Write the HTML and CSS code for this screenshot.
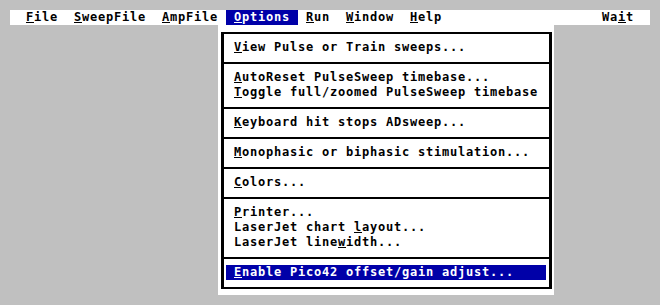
FILE: index.html
```html
<!DOCTYPE html>
<html lang="en">
<head>
    <meta charset="UTF-8">
    <meta name="viewport" content="width=device-width, initial-scale=1.0">
    <title>Options</title>
    <link rel="stylesheet" href="styles.css">
</head>
<body>
    <div class="menubar">
        <span class="menu"><u>F</u>ile</span>
        <span class="menu"><u>S</u>weepFile</span>
        <span class="menu"><u>A</u>mpFile</span>
        <span class="menu open"><u>O</u>ptions</span>
        <span class="menu"><u>R</u>un</span>
        <span class="menu"><u>W</u>indow</span>
        <span class="menu"><u>H</u>elp</span>
        <span class="menu status">Wa<u>i</u>t</span>
    </div>

    <div class="dropdown">
        <div class="frame">
            <div class="section">
                <div class="item"><u>V</u>iew Pulse or Train sweeps...</div>
            </div>
            <div class="section">
                <div class="item"><u>A</u>utoReset PulseSweep timebase...</div>
                <div class="item"><u>T</u>oggle full/zoomed PulseSweep timebase</div>
            </div>
            <div class="section">
                <div class="item"><u>K</u>eyboard hit stops ADsweep...</div>
            </div>
            <div class="section">
                <div class="item"><u>M</u>onophasic or biphasic stimulation...</div>
            </div>
            <div class="section">
                <div class="item"><u>C</u>olors...</div>
            </div>
            <div class="section">
                <div class="item"><u>P</u>rinter...</div>
                <div class="item">LaserJet chart <u>l</u>ayout...</div>
                <div class="item">LaserJet line<u>w</u>idth...</div>
            </div>
            <div class="section">
                <div class="item active"><u>E</u>nable Pico42 offset/gain adjust...</div>
            </div>
        </div>
    </div>
</body>
</html>
```

FILE: styles.css
```css
body {
    margin: 0;
    padding: 10px;
    background-color: #c0c0c0;
    font-family: "DejaVu Sans Mono", monospace;
    font-weight: bold;
    font-size: 12px;
    letter-spacing: 0.775px;
    line-height: 15px;
    color: #000;
}
u {
    text-decoration: underline;
    text-decoration-thickness: 1px;
    text-underline-offset: 1px;
}
.menubar {
    display: flex;
    width: 640px;
    height: 15px;
    padding: 0 8px;
    box-sizing: border-box;
    background-color: #fff;
}
.menu {
    padding: 0 8px;
    white-space: pre;
}
.menu.open {
    background-color: #0000a8;
    color: #fff;
}
.menu.status {
    margin-left: auto;
}
.dropdown {
    margin-left: 208px;
    width: 336px;
    height: 270px;
    padding: 7px 2px 6px 3px;
    box-sizing: border-box;
    background-color: #fff;
}
.frame {
    border-style: solid;
    border-color: #000;
    border-width: 2px 3px;
}
.section {
    padding: 6px 0 7px;
}
.section + .section {
    border-top: 2px solid #000;
}
.item {
    padding-left: 10px;
    white-space: pre;
}
.item.active {
    margin: 0 3px 0 2px;
    padding-left: 8px;
    background-color: #0000a8;
    color: #fff;
}
```
